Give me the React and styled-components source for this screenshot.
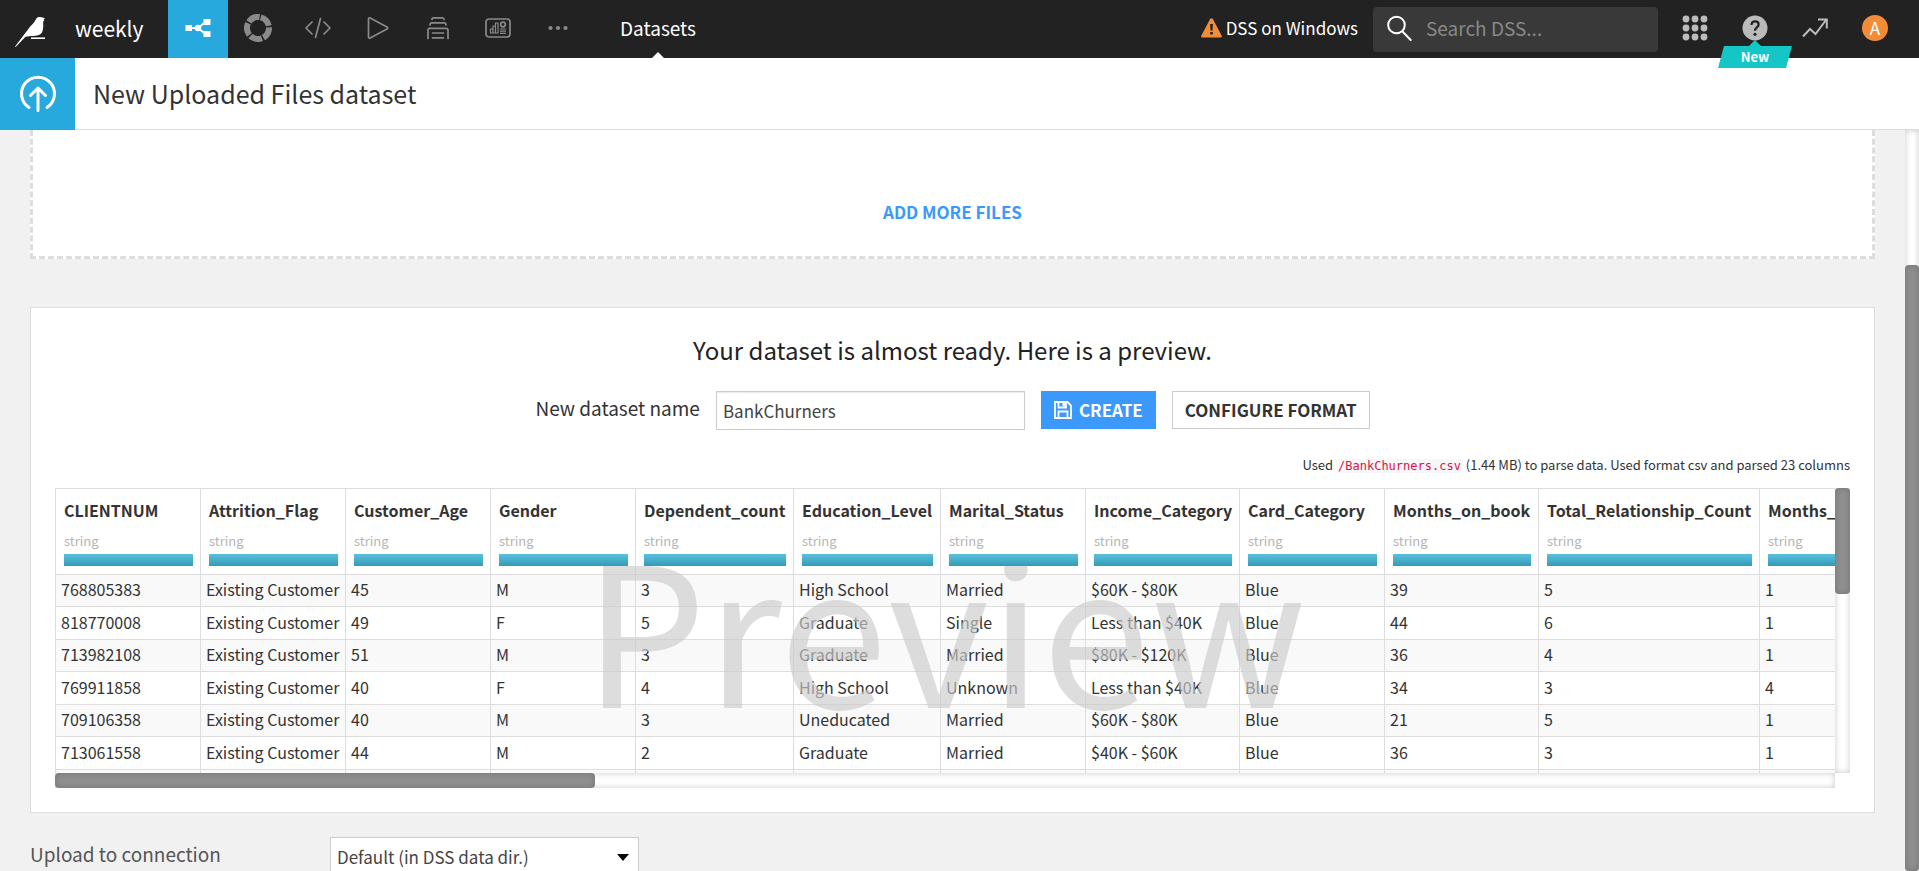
import React from 'react';
import styled, { createGlobalStyle } from 'styled-components';

const GlobalStyle = createGlobalStyle`
  *, *::before, *::after { box-sizing: border-box; }
  body {
    margin: 0;
    background: #f1f1f1;
    color: #333;
    font-family: "Noto Sans CJK SC", "Open Sans", sans-serif;
    font-size: 16px;
    line-height: 24px;
  }
  button, input, select { font: inherit; color: inherit; border-radius: 0; }
`;

const Page = styled.div`
  display: flex;
  flex-direction: column;
  height: 100vh;
  overflow: hidden;
`;

/* ---------- top navigation ---------- */

const NavBar = styled.header`
  display: flex;
  align-items: center;
  flex: none;
  height: 58px;
  padding-right: 14px;
  background: #222;
  color: #fff;
  font-size: 17px;
`;

const HomeLink = styled.a`
  display: flex;
  width: 75px;
  padding: 6px 0 0 15px;
`;

const ProjectLink = styled.a`
  width: 93px;
  padding-bottom: 2px;
  color: #fff;
  font-size: 21px;
  text-decoration: none;
`;

const NavButton = styled.button`
  position: relative;
  display: flex;
  align-items: center;
  justify-content: center;
  width: 60px;
  height: 58px;
  padding: 0 0 2px;
  border: 0;
  background: ${(p) => (p.$active ? '#28a9dd' : 'transparent')};
  color: ${(p) => (p.$active ? '#fff' : p.$light ? '#bbb' : '#8a8a8a')};
  cursor: pointer;
`;

const NavTab = styled.a`
  position: relative;
  display: flex;
  align-items: center;
  height: 58px;
  margin-left: 32px;
  padding-bottom: 2px;
  color: #fff;
  font-size: 19px;
  text-decoration: none;

  &::after {
    content: "";
    position: absolute;
    bottom: 0;
    left: 50%;
    margin-left: -6px;
    border: 6px solid transparent;
    border-top-width: 0;
    border-bottom-color: #fff;
  }
`;

const Notice = styled.div`
  display: flex;
  align-items: center;
  gap: 4px;
  margin-left: auto;
  padding-bottom: 2px;
`;

const SearchBox = styled.label`
  display: flex;
  align-items: center;
  gap: 14px;
  width: 285px;
  height: 45px;
  margin: 0 7px 0 15px;
  padding: 0 14px 2px;
  border-radius: 4px;
  background: #393939;
`;

const SearchInput = styled.input`
  flex: 1;
  min-width: 0;
  padding: 0;
  border: 0;
  outline: 0;
  background: none;
  color: #fff;
  font-size: 19px;

  &::placeholder { color: #888; opacity: 1; }
`;

const NewBadge = styled.span`
  position: absolute;
  top: 46px;
  left: 50%;
  width: 74px;
  height: 22px;
  margin-left: -37px;
  color: #fff;
  font-size: 13px;
  font-weight: 700;
  line-height: 22px;
  text-align: center;
  z-index: 2;

  &::before {
    content: "";
    position: absolute;
    inset: 0 3px;
    background: #14c6c6;
    transform: skewX(-15deg);
    z-index: -1;
  }

  &::after {
    content: "";
    position: absolute;
    bottom: 100%;
    left: 50%;
    margin-left: -6px;
    border: 6px solid transparent;
    border-top-width: 0;
    border-bottom-color: #14c6c6;
  }
`;

const Avatar = styled.span`
  width: 26px;
  height: 26px;
  border-radius: 50%;
  background: #f28c38;
  color: #fff;
  font-size: 17px;
  line-height: 26px;
  text-align: center;
`;

/* ---------- page title ---------- */

const TitleBar = styled.div`
  display: flex;
  align-items: center;
  flex: none;
  height: 72px;
  border-bottom: 1px solid #ddd;
  background: #fff;
`;

const TitleIcon = styled.div`
  display: flex;
  align-items: center;
  justify-content: center;
  align-self: stretch;
  width: 75px;
  margin: 0 18px -1px 0;
  background: #28a9dd;
`;

const Title = styled.h1`
  margin: 0;
  padding-bottom: 2px;
  font-size: 25px;
  font-weight: 400;
  line-height: 36px;
`;

/* ---------- scroll bars ---------- */

const Track = styled.div`
  display: flex;
  flex: none;
  flex-direction: ${(p) => (p.$horizontal ? 'row' : 'column')};
  width: ${(p) => (p.$horizontal ? 'auto' : p.$size)};
  height: ${(p) => (p.$horizontal ? p.$size : 'auto')};
  padding-top: ${(p) => p.$offset || 0};
  background: #fff;
  box-shadow: inset 0 0 6px rgba(0, 0, 0, 0.22);
`;

const Thumb = styled.div`
  flex: ${(p) => (p.$length ? `0 0 ${p.$length}` : 1)};
  border-radius: 4px;
  background: #8f8f8f;
  box-shadow: inset 0 0 6px rgba(0, 0, 0, 0.2);
`;

/* ---------- content ---------- */

const Body = styled.div`
  display: flex;
  flex: 1;
  min-height: 0;
`;

const Content = styled.main`
  flex: 1;
  min-width: 0;
  padding: 0 30px;
  overflow: hidden;
`;

const DropZone = styled.section`
  display: flex;
  align-items: flex-end;
  justify-content: center;
  height: 129px;
  padding-bottom: 32px;
  border: 3px dashed #ddd;
  border-top: 0;
  background: #fff;
`;

const AddFiles = styled.button`
  padding: 0;
  border: 0;
  background: none;
  color: #3b99fc;
  font-weight: 700;
  font-size: 17px;
  line-height: 24px;
  cursor: pointer;
`;

const Panel = styled.section`
  margin-top: 48px;
  padding: 24px;
  border: 1px solid #ddd;
  background: #fff;
`;

const PanelHeading = styled.h2`
  margin: 0;
  color: #222;
  font-size: 24px;
  font-weight: 400;
  line-height: 36px;
  text-align: center;
`;

const CreateForm = styled.form`
  display: flex;
  justify-content: center;
  gap: 16px;
  height: 39px;
  margin-top: 23px;
`;

const FieldLabel = styled.label`
  font-size: 19px;
  line-height: 34px;
`;

const NameInput = styled.input`
  width: 309px;
  height: 39px;
  padding: 0 6px;
  border: 1px solid #ccc;
  box-shadow: inset 0 1px 1px rgba(0, 0, 0, 0.08);
  outline: 0;
  background: #fff;
  color: #444;
  font-size: 17px;
`;

const Button = styled.button`
  display: flex;
  align-items: center;
  gap: 7px;
  height: 38px;
  padding: 0 12px;
  border: 1px solid ${(p) => (p.$primary ? '#3b99fc' : '#ccc')};
  background: ${(p) => (p.$primary ? '#3b99fc' : '#fff')};
  color: ${(p) => (p.$primary ? '#fff' : '#333')};
  font-size: 17px;
  font-weight: 700;
  white-space: nowrap;
  cursor: pointer;
`;

const ParseInfo = styled.p`
  height: 20px;
  margin: 25px 0 13px;
  font-size: 13px;
  line-height: 20px;
  text-align: right;
`;

const Path = styled.code`
  padding: 0 2px;
  border-radius: 3px;
  background: #f7f7f9;
  color: #d14;
  font-family: "DejaVu Sans Mono", monospace;
  font-size: 12px;
  line-height: 1;
`;

const Grid = styled.div`
  position: relative;
  display: grid;
  grid-template-columns: minmax(0, 1fr) 15px;
  grid-template-rows: 285px 15px;
`;

const Viewport = styled.div`
  overflow: hidden;
`;

const DataTable = styled.table`
  width: 1925px;
  table-layout: fixed;
  border-collapse: separate;
  border-spacing: 0;
  border-top: 1px solid #ddd;
  border-left: 1px solid #ddd;
  background: #fff;
  white-space: nowrap;
`;

const Column = styled.col`
  width: ${(p) => p.$width}px;
`;

const HeadCell = styled.th`
  height: 86px;
  padding: 9px 7px 8px 8px;
  border-right: 1px solid #ddd;
  border-bottom: 1px solid #ddd;
  font-weight: 700;
  text-align: left;
  vertical-align: top;
`;

const ColumnType = styled.div`
  margin-top: 10px;
  color: #b5b5b5;
  font-size: 13px;
  font-weight: 400;
  line-height: 18px;
`;

const ValidityBar = styled.div`
  height: 12px;
  margin-top: 4px;
  background: linear-gradient(#5bc0de, #339bb9);
`;

const Row = styled.tr`
  height: 33px;
  &:nth-child(odd) { height: 32px; background: #f9f9f9; }
`;

const Cell = styled.td`
  padding: 0 0 3px 5px;
  border-right: 1px solid #ddd;
  border-bottom: 1px solid #ddd;
  overflow: hidden;
`;

const Watermark = styled.div`
  position: absolute;
  inset: 78px 15px 0 0;
  display: flex;
  align-items: flex-start;
  justify-content: center;
  overflow: hidden;
  color: #ccc;
  opacity: 0.65;
  font-size: 194px;
  line-height: 116px;
  pointer-events: none;
`;

const ConnectionRow = styled.div`
  display: flex;
  margin-top: 24px;
`;

const ConnectionLabel = styled(FieldLabel)`
  width: 300px;
  color: #555;
`;

const SelectWrap = styled.div`
  position: relative;
  width: 309px;
  height: 39px;

  svg {
    position: absolute;
    top: 17px;
    right: 10px;
    pointer-events: none;
  }
`;

const Select = styled.select`
  appearance: none;
  width: 100%;
  height: 100%;
  padding: 0 6px;
  border: 1px solid #ccc;
  outline: 0;
  background: #fff;
  color: #444;
  font-size: 17px;
`;

/* ---------- icons ---------- */

const BirdIcon = () => (
  <svg width="30" height="30" viewBox="0 0 30 30" fill="#fff">
    <path d="M20.500 3C21.500 0.500 23 0 25 0 27 0 27.500 0.800 30 1.200L28.600 2.600 29.400 4 28 4.500C28.400 8 28.600 12 27 15.500 25 18.500 21 19.200 16 19L10.500 19.800 0.600 30 0 29.400 13 12.500C15 9 19 6.500 20.500 3Z" />
    <path d="M16 20.400H30V22H16Z" />
  </svg>
);

const FlowIcon = () => (
  <svg width="26" height="20" viewBox="0 0 26 20">
    <path d="M3 10H13L20.500 4M13 10L20.500 16" fill="none" stroke="#fff" strokeWidth="2" />
    <path d="M0.500 7H7V13H0.500ZM18.500 1H25.500V7H18.500ZM18.500 13H25.500V19H18.500Z" fill="#fff" />
    <circle cx="13" cy="10" r="3.200" fill="#fff" />
  </svg>
);

const RingIcon = () => (
  <svg width="28" height="28" viewBox="0 0 28 28" fill="none" stroke="currentColor">
    <circle cx="14" cy="14" r="11" strokeWidth="6" strokeDasharray="12.223 1.600" transform="rotate(-76 14 14)" />
  </svg>
);

const CodeIcon = () => (
  <svg width="26" height="22" viewBox="0 0 26 22" fill="none" stroke="currentColor" strokeWidth="1.700" strokeLinecap="round" strokeLinejoin="round">
    <path d="M7 5L1 11 7 17M19 5L25 11 19 17M15.500 1.500L10.500 20.500" />
  </svg>
);

const PlayIcon = () => (
  <svg width="22" height="24" viewBox="0 0 22 24" fill="none" stroke="currentColor" strokeWidth="1.700" strokeLinejoin="round">
    <path d="M1.500 3C1.500 2 2.300 1.500 3.200 2L20 11C21 11.600 21 12.400 20 13L3.200 22C2.300 22.500 1.500 22 1.500 21Z" />
  </svg>
);

const StackIcon = () => (
  <svg width="22" height="24" viewBox="0 0 22 24" fill="none" stroke="currentColor" strokeWidth="1.700" strokeLinecap="round">
    <path d="M5 3.500C5 2.300 5.700 1.800 6.500 1.800H15.500C16.300 1.800 17 2.300 17 3.500" />
    <path d="M3 9C3 7.500 3.700 6.900 4.800 6.900H17.200C18.300 6.900 19 7.500 19 9" />
    <path d="M1 22.500V14.500C1 13 1.700 12.300 2.800 12.300H19.200C20.300 12.300 21 13 21 14.500V22.500" />
    <path d="M5.500 17H16.500M5.500 21.800H16.500" />
  </svg>
);

const DashboardIcon = () => (
  <svg width="26" height="20" viewBox="0 0 26 20" fill="none" stroke="currentColor" strokeWidth="1.700">
    <rect x="1" y="1" width="24" height="18" rx="3" />
    <path d="M5.500 15V11H8V15ZM8 15V8H10.500V15ZM10.500 15V5H13V15ZM5 15H13" strokeWidth="1.200" />
    <circle cx="18" cy="6.500" r="2.300" />
    <path d="M15 11H21M15 13.200H21M15 15.400H21" strokeWidth="1.200" />
  </svg>
);

const DotsIcon = () => (
  <svg width="20" height="6" viewBox="0 0 20 6" fill="currentColor">
    <circle cx="2.500" cy="3" r="2.100" />
    <circle cx="10" cy="3" r="2.100" />
    <circle cx="17.500" cy="3" r="2.100" />
  </svg>
);

const WarningIcon = () => (
  <svg width="21" height="20" viewBox="0 0 21 20">
    <path d="M9 1.300C9.700 0 11.300 0 12 1.300L20.600 17.500C21.200 18.800 20.600 19.600 19.300 19.600H1.700C0.400 19.600 -0.200 18.800 0.400 17.500Z" fill="#f28c38" />
    <path d="M9.100 6H11.900L11.500 12.500H9.500ZM9.200 14H11.800V16.600H9.200Z" fill="#222" />
  </svg>
);

const SearchIcon = () => (
  <svg width="25" height="26" viewBox="0 0 25 26" fill="none" stroke="#fff" strokeWidth="2" strokeLinecap="round">
    <circle cx="9.500" cy="10" r="8.300" />
    <path d="M15.500 16.500L23.700 25" />
  </svg>
);

const AppsIcon = () => (
  <svg width="26" height="26" viewBox="0 0 26 26" fill="currentColor">
    {[4, 13, 22].map((y) => [4, 13, 22].map((x) => <circle key={`${x}-${y}`} cx={x} cy={y} r="3.400" />))}
  </svg>
);

const HelpIcon = () => (
  <svg width="26" height="26" viewBox="0 0 26 26">
    <circle cx="13" cy="13" r="12.500" fill="currentColor" />
    <path d="M9.500 10C9.500 7.700 11 6.300 13.100 6.300 15.200 6.300 16.600 7.600 16.600 9.400 16.600 12.300 13 12.400 13 15.800" fill="none" stroke="#222" strokeWidth="2.200" />
    <circle cx="13" cy="19.300" r="1.600" fill="#222" />
  </svg>
);

const TrendIcon = () => (
  <svg width="26" height="20" viewBox="0 0 26 20" fill="none" stroke="currentColor" strokeWidth="2">
    <path d="M1 18.500L8 11 13.500 16 24 2M16 1.500H24.800V10.500" />
  </svg>
);

const UploadIcon = () => (
  <svg width="38" height="38" viewBox="0 0 38 38" fill="none" stroke="#fff" strokeWidth="3" strokeLinecap="round" strokeLinejoin="round">
    <path d="M10 32.500A16.500 16.500 0 1 1 28 32.500" />
    <path d="M19 35.500V13M11.500 20.500L19 13 26.500 20.500" />
  </svg>
);

const SaveIcon = () => (
  <svg width="18" height="18" viewBox="0 0 18 18" fill="none" stroke="currentColor" strokeWidth="1.800">
    <path d="M1 1H13.500L17 4.500V17H1ZM4.500 1V6.500H12V1M4.500 17V10.500H13.500V17" />
    <path d="M8.500 2H11V5.500H8.500Z" fill="currentColor" stroke="none" />
  </svg>
);

const CaretIcon = () => (
  <svg width="12" height="7" viewBox="0 0 12 7">
    <path d="M0 0H12L6 7Z" fill="#000" />
  </svg>
);

/* ---------- data ---------- */

const NAV_ITEMS = [
  { label: 'Flow', icon: <FlowIcon />, active: true },
  { label: 'Lab', icon: <RingIcon /> },
  { label: 'Code', icon: <CodeIcon /> },
  { label: 'Jobs', icon: <PlayIcon /> },
  { label: 'Deployments', icon: <StackIcon /> },
  { label: 'Dashboards', icon: <DashboardIcon /> },
  { label: 'More', icon: <DotsIcon /> },
];

const COLUMNS = [
  ['CLIENTNUM', 145],
  ['Attrition_Flag', 145],
  ['Customer_Age', 145],
  ['Gender', 145],
  ['Dependent_count', 158],
  ['Education_Level', 147],
  ['Marital_Status', 145],
  ['Income_Category', 154],
  ['Card_Category', 145],
  ['Months_on_book', 154],
  ['Total_Relationship_Count', 221],
  ['Months_Inactive_12_mon', 220],
];

const ROWS = [
  ['768805383', 'Existing Customer', '45', 'M', '3', 'High School', 'Married', '$60K - $80K', 'Blue', '39', '5', '1'],
  ['818770008', 'Existing Customer', '49', 'F', '5', 'Graduate', 'Single', 'Less than $40K', 'Blue', '44', '6', '1'],
  ['713982108', 'Existing Customer', '51', 'M', '3', 'Graduate', 'Married', '$80K - $120K', 'Blue', '36', '4', '1'],
  ['769911858', 'Existing Customer', '40', 'F', '4', 'High School', 'Unknown', 'Less than $40K', 'Blue', '34', '3', '4'],
  ['709106358', 'Existing Customer', '40', 'M', '3', 'Uneducated', 'Married', '$60K - $80K', 'Blue', '21', '5', '1'],
  ['713061558', 'Existing Customer', '44', 'M', '2', 'Graduate', 'Married', '$40K - $60K', 'Blue', '36', '3', '1'],
  ['810347208', 'Existing Customer', '51', 'M', '4', 'Unknown', 'Married', '$120K +', 'Gold', '46', '6', '1'],
];

export default function App() {
  return (
    <Page>
      <GlobalStyle />
      <NavBar>
        <HomeLink href="#home" aria-label="Home"><BirdIcon /></HomeLink>
        <ProjectLink href="#project">weekly</ProjectLink>
        {NAV_ITEMS.map((item) => (
          <NavButton key={item.label} type="button" aria-label={item.label} $active={item.active}>
            {item.icon}
          </NavButton>
        ))}
        <NavTab href="#datasets">Datasets</NavTab>
        <Notice><WarningIcon />DSS on Windows</Notice>
        <SearchBox>
          <SearchIcon />
          <SearchInput type="search" placeholder="Search DSS..." aria-label="Search DSS" />
        </SearchBox>
        <NavButton type="button" aria-label="Applications" $light><AppsIcon /></NavButton>
        <NavButton type="button" aria-label="Help" $light><HelpIcon /><NewBadge>New</NewBadge></NavButton>
        <NavButton type="button" aria-label="Activity" $light><TrendIcon /></NavButton>
        <NavButton type="button" aria-label="Profile"><Avatar>A</Avatar></NavButton>
      </NavBar>

      <TitleBar>
        <TitleIcon><UploadIcon /></TitleIcon>
        <Title>New Uploaded Files dataset</Title>
      </TitleBar>

      <Body>
        <Content>
          <DropZone>
            <AddFiles type="button">ADD MORE FILES</AddFiles>
          </DropZone>

          <Panel>
            <PanelHeading>Your dataset is almost ready. Here is a preview.</PanelHeading>
            <CreateForm onSubmit={(e) => e.preventDefault()}>
              <FieldLabel htmlFor="dataset-name">New dataset name</FieldLabel>
              <NameInput id="dataset-name" type="text" defaultValue="BankChurners" />
              <Button type="submit" $primary><SaveIcon />CREATE</Button>
              <Button type="button">CONFIGURE FORMAT</Button>
            </CreateForm>
            <ParseInfo>
              Used <Path>/BankChurners.csv</Path> (1.44 MB) to parse data. Used format csv and parsed 23 columns
            </ParseInfo>
            <Grid>
              <Viewport>
                <DataTable>
                  <colgroup>
                    {COLUMNS.map(([name, width]) => <Column key={name} $width={width} />)}
                  </colgroup>
                  <thead>
                    <tr>
                      {COLUMNS.map(([name]) => (
                        <HeadCell key={name} scope="col">
                          {name}
                          <ColumnType>string</ColumnType>
                          <ValidityBar />
                        </HeadCell>
                      ))}
                    </tr>
                  </thead>
                  <tbody>
                    {ROWS.map((row) => (
                      <Row key={row[0]}>
                        {row.map((value, i) => <Cell key={COLUMNS[i][0]}>{value}</Cell>)}
                      </Row>
                    ))}
                  </tbody>
                </DataTable>
              </Viewport>
              <Track $size="15px"><Thumb $length="106px" /></Track>
              <Track $horizontal $size="15px"><Thumb $length="540px" /></Track>
              <Watermark aria-hidden="true">Preview</Watermark>
            </Grid>
          </Panel>

          <ConnectionRow>
            <ConnectionLabel htmlFor="connection">Upload to connection</ConnectionLabel>
            <SelectWrap>
              <Select id="connection" defaultValue="default">
                <option value="default">Default (in DSS data dir.)</option>
              </Select>
              <CaretIcon />
            </SelectWrap>
          </ConnectionRow>
        </Content>
        <Track $size="14px" $offset="135px">
          <Thumb />
        </Track>
      </Body>
    </Page>
  );
}
